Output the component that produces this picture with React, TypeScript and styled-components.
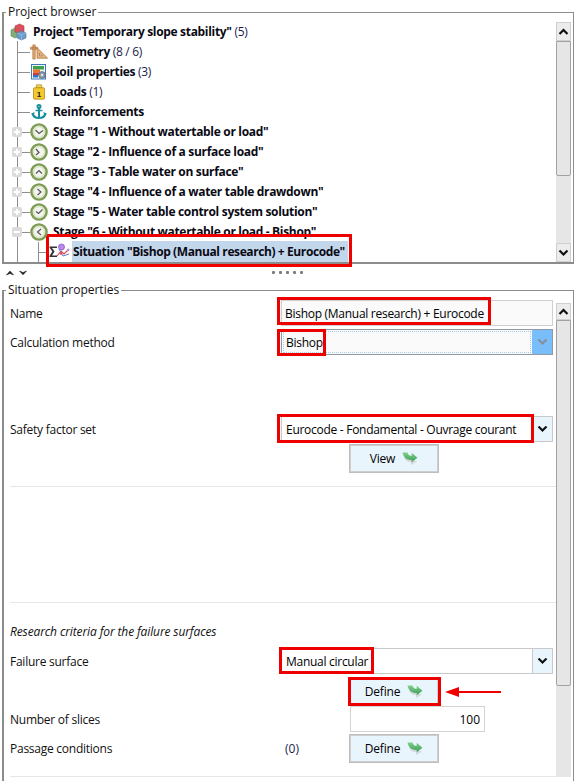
import React from "react";
import styled, { createGlobalStyle } from "styled-components";

const Global = createGlobalStyle`
  html, body { margin: 0; padding: 0; background: #fff; }
  body { font-family: "Open Sans", "Noto Sans", sans-serif; font-size: 12px; color: #000; }
`;

const Page = styled.div`
  position: relative;
  width: 575px;
  height: 781px;
  padding-top: 4px;
  box-sizing: border-box;
  overflow: hidden;
  display: flex;
  flex-direction: column;
  background: #fff;
`;

const Frame = styled.fieldset<{ $height: number; $open?: boolean }>`
  margin: 0 1px 0 2px;
  padding: 0 2px 0 0;
  border: 1px solid #8c8c8c;
  border-left-width: 2px;
  border-bottom-width: ${(p) => (p.$open ? 0 : 2)}px;
  height: ${(p) => p.$height}px;
  min-width: 0;
  box-sizing: border-box;
  display: flex;
  flex-shrink: 0;
`;

const Legend = styled.legend`
  margin-left: 2px;
  padding: 0 2px;
  height: 17px;
  line-height: 16px;
  color: #111;
`;

const FrameBody = styled.div`
  flex: 1;
  min-height: 0;
  display: flex;
  justify-content: space-between;
`;

const Tree = styled.div`
  flex: 1;
  padding-top: 1px;
  overflow: hidden;
`;

const TreeRow = styled.div<{ $level: number }>`
  position: relative;
  height: 20px;
  display: flex;
  align-items: center;
  padding-left: ${(p) => [6, 26, 26][p.$level]}px;
  gap: 4px;
  white-space: nowrap;
  ${(p) =>
    p.$level === 1
      ? `
    &::before { content: ""; position: absolute; left: 13px; top: -1px; bottom: 0; width: 1px; background: #8f8f8f; }
    &::after { content: ""; position: absolute; left: 14px; top: 10px; width: 12px; height: 1px; background: #8f8f8f; }
  `
      : ""}
  ${(p) =>
    p.$level === 2
      ? `
    &::before { content: ""; position: absolute; left: 13px; top: 0; bottom: -3px; width: 1px; background: #8f8f8f; }
    &::after { content: ""; position: absolute; left: 34px; top: 0; bottom: -3px; width: 1px; background: #8f8f8f; }
  `
      : ""}
`;

const Knob = styled.span`
  position: absolute;
  left: 8px;
  top: 5px;
  width: 10px;
  height: 10px;
  border-radius: 2px;
  background: #dcdcdc;
  z-index: 1;
  display: flex;
  align-items: center;
  justify-content: center;
`;

const KnobBar = styled.span<{ $vertical?: boolean }>`
  position: absolute;
  background: #fff;
  ${(p) => (p.$vertical ? "width: 2px; height: 6px;" : "width: 6px; height: 2px;")}
`;

const Branch = styled.span`
  position: absolute;
  left: 35px;
  top: 10px;
  width: 10px;
  height: 1px;
  background: #8f8f8f;
`;

const IconSlot = styled.span<{ $width?: number }>`
  width: ${(p) => p.$width ?? 18}px;
  height: 18px;
  flex-shrink: 0;
  display: flex;
  align-items: center;
  justify-content: center;
  z-index: 1;
`;

const NodeText = styled.span<{ $selected?: boolean }>`
  font-weight: 700;
  letter-spacing: -0.32px;
  line-height: 20px;
  margin-left: 1px;
  color: #0a0a14;
  ${(p) =>
    p.$selected
      ? "background: #c2d7ec; padding: 1px 3px 1px 1px; margin-left: -2px; letter-spacing: -0.4px;"
      : ""}
`;

const Count = styled.span`
  font-weight: 400;
  color: #1c1c4a;
`;

const Bar = styled.div<{ $top: number }>`
  width: 15px;
  flex-shrink: 0;
  margin-top: ${(p) => p.$top}px;
  display: flex;
  flex-direction: column;
  background: #e6e6e6;
  align-self: stretch;
`;

const BarButton = styled.div<{ $height: number }>`
  height: ${(p) => p.$height}px;
  box-sizing: border-box;
  display: flex;
  align-items: center;
  justify-content: center;
  background: #ececec;
  border: 1px solid #cfcfcf;
  flex-shrink: 0;
`;

const Thumb = styled.div<{ $height: number }>`
  height: ${(p) => p.$height}px;
  box-sizing: border-box;
  background: #e6e6e6;
  border: 1px solid #a2a2a2;
  border-radius: 0 0 2px 2px;
  flex-shrink: 0;
`;

const Track = styled.div`
  flex: 1;
`;

const Splitter = styled.div`
  height: 18px;
  box-sizing: border-box;
  flex-shrink: 0;
  display: flex;
  align-items: center;
  justify-content: space-between;
  padding: 0 272px 1px 6px;
`;

const SplitArrows = styled.div`
  display: flex;
  gap: 5px;
`;

const Dots = styled.div`
  display: flex;
  gap: 4px;
`;

const Dot = styled.span`
  width: 3px;
  height: 3px;
  border-radius: 1px;
  background: #7d7d7d;
`;

const Form = styled.div`
  flex: 1;
  padding: 1px 0 0 6px;
  overflow: hidden;
`;

const Row = styled.div<{ $top?: number; $height?: number }>`
  display: grid;
  grid-template-columns: 271px 272px;
  align-items: center;
  margin-top: ${(p) => p.$top ?? 0}px;
  height: ${(p) => p.$height ?? 26}px;
`;

const Label = styled.div`
  color: #111;
  letter-spacing: -0.25px;
`;

const TextField = styled.div`
  height: 26px;
  box-sizing: border-box;
  border: 1px solid #cfcfcf;
  background: #fafafa;
  padding: 0 3px;
  display: flex;
  align-items: center;
  letter-spacing: -0.28px;
`;

const NumberField = styled.div`
  width: 135px;
  height: 26px;
  box-sizing: border-box;
  margin-left: 69px;
  border: 1px solid #d4d4d4;
  background: #fff;
  padding: 0 4px;
  display: flex;
  align-items: center;
  justify-content: flex-end;
`;

const SelectBox = styled.div<{ $focused?: boolean }>`
  height: 26px;
  box-sizing: border-box;
  border: 1px solid ${(p) => (p.$focused ? "#8f9aa5" : "#c9c9c9")};
  display: flex;
  background: ${(p) => (p.$focused ? "#fafafa" : "#fff")};
`;

const SelectValue = styled.div<{ $focused?: boolean }>`
  flex: 1;
  display: flex;
  align-items: center;
  padding-left: 4px;
  letter-spacing: -0.28px;
  ${(p) => (p.$focused ? "border: 1px dotted #a8cbe6; margin: 1px; padding-left: 2px;" : "")}
`;

const SelectArrow = styled.div<{ $focused?: boolean }>`
  width: 20px;
  display: flex;
  align-items: center;
  justify-content: center;
  box-sizing: border-box;
  background: ${(p) => (p.$focused ? "#79bdfa" : "#e9f5fd")};
  border-left: 1px solid ${(p) => (p.$focused ? "#79bdfa" : "#c9c9c9")};
`;

const ActionCell = styled.div`
  display: flex;
  align-items: center;
`;

const ParenCount = styled.span`
  width: 68px;
  padding-left: 4px;
  box-sizing: border-box;
  color: #1c1c4a;
`;

const ActionButton = styled.div<{ $indent?: boolean }>`
  width: 90px;
  height: 29px;
  box-sizing: border-box;
  margin-left: ${(p) => (p.$indent ? 68 : 0)}px;
  border: 1px solid #bdbdbd;
  outline: 1px solid #cfcfcf;
  outline-offset: -2px;
  background: #e9f5fd;
  display: flex;
  align-items: center;
  justify-content: center;
  gap: 7px;
  letter-spacing: -0.2px;
`;

const Divider = styled.div<{ $top: number }>`
  height: 1px;
  margin-top: ${(p) => p.$top}px;
  background: #e6e6e6;
`;

const SectionTitle = styled.div<{ $top: number }>`
  margin-top: ${(p) => p.$top}px;
  height: 18px;
  line-height: 18px;
  font-style: italic;
  color: #111;
  letter-spacing: -0.12px;
`;

const RedBox = styled.div<{ $x: number; $y: number; $w: number; $h: number }>`
  position: absolute;
  left: ${(p) => p.$x}px;
  top: ${(p) => p.$y}px;
  width: ${(p) => p.$w}px;
  height: ${(p) => p.$h}px;
  box-sizing: border-box;
  border: 3px solid #ee0000;
  pointer-events: none;
`;

const PointerArrow = styled.svg`
  position: absolute;
  left: 444px;
  top: 686px;
`;

const Chevron = ({ down, color = "#111" }: { down?: boolean; color?: string }) => (
  <svg width="11" height="8" viewBox="0 0 11 8">
    <path
      d={down ? "M1.5 1.5 L5.5 5.5 L9.5 1.5" : "M1.5 6 L5.5 2 L9.5 6"}
      fill="none"
      stroke={color}
      strokeWidth="2.2"
    />
  </svg>
);

const TinyCaret = ({ down }: { down?: boolean }) => (
  <svg width="8" height="6" viewBox="0 0 8 6">
    <path d={down ? "M0.5 1 L4 4.8 L7.5 1 L4 2.6Z" : "M0.5 5 L4 1 L7.5 5 L4 3.4Z"} fill="#222" stroke="#222" strokeWidth="0.6" />
  </svg>
);

const GoArrow = () => (
  <svg width="16" height="14" viewBox="0 0 16 14">
    <defs>
      <linearGradient id="goarrow" x1="0" y1="0" x2="0" y2="1">
        <stop offset="0" stopColor="#7fd08a" />
        <stop offset="1" stopColor="#3c9c58" />
      </linearGradient>
    </defs>
    <path d="M2 5 C3 9 6 10 9 10 V13 L15 9.5 Z" fill="#c4c4c4" opacity="0.6" />
    <path d="M0.5 0.5 H5.5 C6 3 7.5 3.8 9.7 3.8 V0.8 L15.5 5.7 L9.7 10.3 V8 C4.5 8 1.5 5.5 0.5 0.5Z" fill="url(#goarrow)" />
  </svg>
);

const ClockIcon = ({ hands }: { hands: string }) => (
  <svg width="18" height="18" viewBox="0 0 18 18">
    <circle cx="9" cy="9" r="7.6" fill="#f4f5ee" stroke="#7b9c52" strokeWidth="2.4" />
    <circle cx="9" cy="9" r="5.4" fill="none" stroke="#c6d8a8" strokeWidth="0.8" />
    <path d={hands} fill="none" stroke="#555" strokeWidth="1.2" />
  </svg>
);

const ProjectIcon = () => (
  <svg width="18" height="18" viewBox="0 0 18 18">
    <path d="M1 7 L5 5 L9 7 V13 L5 15 L1 13Z" fill="#7fae78" stroke="#5f8a5a" strokeWidth="0.6" />
    <path d="M5 3 L9.5 1 L14 3 V9 L9.5 11 L5 9Z" fill="#d9505a" stroke="#b23a44" strokeWidth="0.6" />
    <path d="M7 10 L11.5 8 L16 10 V15 L11.5 17 L7 15Z" fill="#6d9ccb" stroke="#4a78a8" strokeWidth="0.6" />
    <path d="M7 10 L11.5 12 L16 10 M11.5 12 V17" fill="none" stroke="#9cc0e2" strokeWidth="0.7" />
  </svg>
);

const GeometryIcon = () => (
  <svg width="19" height="16" viewBox="0 0 19 16">
    <path d="M0.5 3 H8 V5 H0.5Z M3 0.5 H5.5 V15.5 H3Z" fill="#e3ab72" stroke="#a86c38" strokeWidth="0.7" />
    <path d="M7.5 14.5 V3.5 L18.5 14.5Z M10 12 H13 L10 9Z" fill="#e9b681" stroke="#a86c38" strokeWidth="0.8" fillRule="evenodd" />
  </svg>
);

const SoilIcon = () => (
  <svg width="16" height="16" viewBox="0 0 16 16">
    <rect x="0.5" y="0.5" width="14" height="14.5" fill="#f2f6fb" stroke="#3d78b8" />
    <rect x="2" y="2" width="11" height="3.5" fill="#3fa04a" />
    <rect x="2" y="5.5" width="7" height="3" fill="#e8772e" />
    <rect x="2" y="8.5" width="6" height="2.5" fill="#d93a30" />
    <rect x="2" y="11" width="5" height="2.5" fill="#2e71c4" />
    <circle cx="11" cy="11" r="3.4" fill="#8d99a6" stroke="#5f6b78" strokeWidth="0.8" />
    <circle cx="11" cy="11" r="1.2" fill="#e5e8ec" />
  </svg>
);

const LoadIcon = () => (
  <svg width="14" height="16" viewBox="0 0 14 16">
    <path d="M4.5 0.8 H9.5 L10 3.5 H4Z" fill="#f1d35a" stroke="#b08a1a" strokeWidth="0.7" />
    <rect x="1.5" y="3.8" width="11" height="11.4" rx="1" fill="#f5c92e" stroke="#b08a1a" strokeWidth="0.8" />
    <text x="7" y="13" textAnchor="middle" fontFamily="Liberation Sans, sans-serif" fontSize="8" fontWeight="700" fill="#222">1</text>
  </svg>
);

const AnchorIcon = () => (
  <svg width="16" height="16" viewBox="0 0 16 16">
    <g fill="none" stroke="#16909c" strokeWidth="2">
      <circle cx="8" cy="2.6" r="1.5" />
      <path d="M8 4 V14" />
      <path d="M4.5 6.5 H11.5" strokeWidth="1.5" />
      <path d="M1.5 9 C2 12.5 5 14 8 14 C11 14 14 12.5 14.5 9" />
    </g>
    <path d="M0 10 L3.5 8 L3 11.5Z M16 10 L12.5 8 L13 11.5Z" fill="#16909c" />
  </svg>
);

const SituationIcon = () => (
  <svg width="22" height="18" viewBox="0 0 22 18">
    <path d="M1.5 3.5 H9 V5 H4 L6.6 8.5 L4 12.5 H9 V14 H1.5 V13 L4.3 8.5 L1.5 4.5Z" fill="#333" />
    <path d="M9 13 L13 8 L16 11 L21 6" fill="none" stroke="#e0424a" strokeWidth="1.1" />
    <path d="M11 6 L15 13 L21 11" fill="none" stroke="#5a7fd0" strokeWidth="1" />
    <circle cx="13.5" cy="4" r="3" fill="#b98ae8" stroke="#8a58c4" strokeWidth="0.8" />
    <circle cx="20" cy="7" r="1.3" fill="#b98ae8" />
    <circle cx="13" cy="10.5" r="1.2" fill="#e0424a" />
  </svg>
);

const stages = [
  { label: 'Stage "1 - Without watertable or load"', hands: "M5.5 7 L9 10.5 L13 7.5" },
  { label: 'Stage "2 - Influence of a surface load"', hands: "M6 6 L9 9.5 L6 12" },
  { label: 'Stage "3 - Table water on surface"', hands: "M6 10.5 L9 7.5 L12 10.5" },
  { label: 'Stage "4 - Influence of a water table drawdown"', hands: "M7.5 6 L11 9 L7.5 12" },
  { label: 'Stage "5 - Water table control system solution"', hands: "M6 8.5 L8.5 10.5 L12.5 6.5" },
  { label: 'Stage "6 - Without watertable or load - Bishop"', hands: "M11 6 L7.5 9 L11 12" },
];

const Scrollbar = ({ top, up, thumb, down }: { top: number; up: number; thumb: number; down?: number }) => (
  <Bar $top={top}>
    <BarButton $height={up}>
      <Chevron />
    </BarButton>
    <Thumb $height={thumb} />
    <Track />
    {down ? (
      <BarButton $height={down}>
        <Chevron down />
      </BarButton>
    ) : null}
  </Bar>
);

export default function App() {
  return (
    <Page>
      <Global />
      <Frame $height={260}>
        <Legend>Project browser</Legend>
        <FrameBody>
          <Tree>
            <TreeRow $level={0}>
              <IconSlot><ProjectIcon /></IconSlot>
              <NodeText>Project "Temporary slope stability" <Count>(5)</Count></NodeText>
            </TreeRow>
            <TreeRow $level={1}>
              <IconSlot><GeometryIcon /></IconSlot>
              <NodeText>Geometry <Count>(8 / 6)</Count></NodeText>
            </TreeRow>
            <TreeRow $level={1}>
              <IconSlot><SoilIcon /></IconSlot>
              <NodeText>Soil properties <Count>(3)</Count></NodeText>
            </TreeRow>
            <TreeRow $level={1}>
              <IconSlot><LoadIcon /></IconSlot>
              <NodeText>Loads <Count>(1)</Count></NodeText>
            </TreeRow>
            <TreeRow $level={1}>
              <IconSlot><AnchorIcon /></IconSlot>
              <NodeText>Reinforcements</NodeText>
            </TreeRow>
            {stages.map((s, i) => (
              <TreeRow $level={1} key={s.label}>
                <Knob>
                  <KnobBar />
                  {i < 5 ? <KnobBar $vertical /> : null}
                </Knob>
                <IconSlot><ClockIcon hands={s.hands} /></IconSlot>
                <NodeText>{s.label}</NodeText>
              </TreeRow>
            ))}
            <TreeRow $level={2}>
              <Branch />
              <IconSlot $width={14} />
              <IconSlot $width={22}><SituationIcon /></IconSlot>
              <NodeText $selected>Situation "Bishop (Manual research) + Eurocode"</NodeText>
            </TreeRow>
          </Tree>
          <Scrollbar top={1} up={19} thumb={135} down={19} />
        </FrameBody>
      </Frame>
      <Splitter>
        <SplitArrows>
          <TinyCaret />
          <TinyCaret down />
        </SplitArrows>
        <Dots>
          <Dot /><Dot /><Dot /><Dot /><Dot />
        </Dots>
      </Splitter>
      <Frame $height={500} $open>
        <Legend>Situation properties</Legend>
        <FrameBody>
          <Form>
            <Row>
              <Label>Name</Label>
              <TextField>Bishop (Manual research) + Eurocode</TextField>
            </Row>
            <Row $top={3}>
              <Label>Calculation method</Label>
              <SelectBox $focused>
                <SelectValue $focused>Bishop</SelectValue>
                <SelectArrow $focused><Chevron down color="#8a8f96" /></SelectArrow>
              </SelectBox>
            </Row>
            <Row $top={61}>
              <Label>Safety factor set</Label>
              <SelectBox>
                <SelectValue>Eurocode - Fondamental - Ouvrage courant</SelectValue>
                <SelectArrow><Chevron down /></SelectArrow>
              </SelectBox>
            </Row>
            <Row $top={2} $height={29}>
              <span />
              <ActionButton $indent>View <GoArrow /></ActionButton>
            </Row>
            <Divider $top={13} />
            <Divider $top={115} />
            <SectionTitle $top={20}>Research criteria for the failure surfaces</SectionTitle>
            <Row $top={7}>
              <Label>Failure surface</Label>
              <SelectBox>
                <SelectValue>Manual circular</SelectValue>
                <SelectArrow><Chevron down /></SelectArrow>
              </SelectBox>
            </Row>
            <Row $top={3} $height={29}>
              <span />
              <ActionButton $indent>Define <GoArrow /></ActionButton>
            </Row>
            <Row>
              <Label>Number of slices</Label>
              <NumberField>100</NumberField>
            </Row>
            <Row $top={2} $height={29}>
              <Label>Passage conditions</Label>
              <ActionCell>
                <ParenCount>(0)</ParenCount>
                <ActionButton>Define <GoArrow /></ActionButton>
              </ActionCell>
            </Row>
            <Divider $top={13} />
          </Form>
          <Scrollbar top={4} up={17} thumb={366} />
        </FrameBody>
      </Frame>
      <RedBox $x={46} $y={234} $w={306} $h={33} />
      <RedBox $x={277} $y={297} $w={214} $h={28} />
      <RedBox $x={277} $y={329} $w={49} $h={27} />
      <RedBox $x={277} $y={414} $w={257} $h={29} />
      <RedBox $x={279} $y={647} $w={95} $h={27} />
      <RedBox $x={348} $y={677} $w={93} $h={29} />
      <PointerArrow width="58" height="12" viewBox="0 0 58 12">
        <path d="M1 6 L15 1 V5 H57 V7 H15 V11Z" fill="#ee0000" />
      </PointerArrow>
    </Page>
  );
}
